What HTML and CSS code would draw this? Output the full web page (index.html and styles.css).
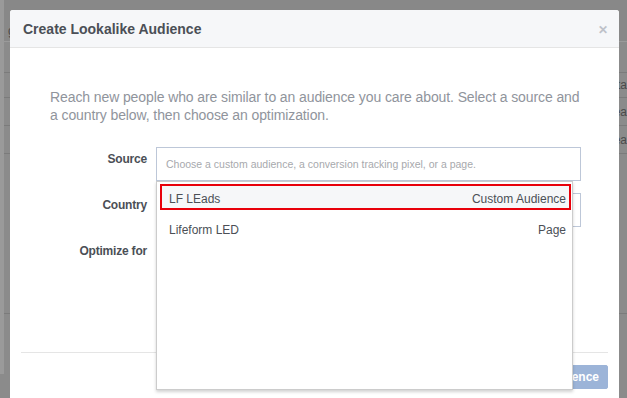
FILE: index.html
```html
<!DOCTYPE html>
<html>
<head>
<meta charset="utf-8">
<link rel="stylesheet" href="styles.css">
</head>
<body>
<div class="page">
  <div class="bg-row r1"><span class="bg-left">g</span></div>
  <div class="bg-row r2"></div>
  <div class="bg-row r3"><span class="bg-right">ta</span></div>
  <div class="bg-row r4"><span class="bg-right">ea</span></div>
  <div class="bg-row r5"><span class="bg-right">ea</span></div>
  <div class="bg-row r6"></div>
  <div class="bg-row r7"></div>
</div>

<div class="dialog">
  <div class="dialog-header">
    <span class="dialog-title">Create Lookalike Audience</span>
    <span class="close">&#x2715;</span>
  </div>
  <div class="dialog-body">
    <p class="intro">Reach new people who are similar to an audience you care about. Select a source and a country below, then choose an optimization.</p>
    <div class="form">
      <label class="label">Source</label>
      <div class="field source">
        <div class="input placeholder">Choose a custom audience, a conversion tracking pixel, or a page.</div>
        <div class="menu">
          <div class="item selected"><span>LF LEads</span><span>Custom Audience</span></div>
          <div class="item"><span>Lifeform LED</span><span>Page</span></div>
        </div>
      </div>
      <label class="label">Country</label>
      <div class="field"><div class="input"></div></div>
      <label class="label">Optimize for</label>
      <div class="field opt"></div>
    </div>
  </div>
  <div class="dialog-footer">
    <button class="primary">Create Audience</button>
  </div>
</div>
</body>
</html>
```

FILE: styles.css
```css
html, body {
  margin: 0;
  padding: 0;
}
body {
  width: 627px;
  height: 398px;
  overflow: hidden;
  position: relative;
  background: #8b8b8b;
  font-family: "Liberation Sans", Arial, sans-serif;
}
.page {
  display: flex;
  flex-direction: column;
  border-left: 4px solid #9a9a9a;
}
.bg-row {
  border-bottom: 1px solid #7b7b7b;
  display: flex;
  justify-content: space-between;
  align-items: center;
  font-size: 12px;
  color: #4a4a4a;
  padding: 0 0 0 4px;
}
.r1 { height: 41px; border-bottom-color: #9a9a9a; background: #888; }
.r2 { height: 30px; }
.r3 { height: 24px; }
.r4 { height: 27px; }
.r5 { height: 27px; }
.r6 { height: 159px; }
.r7 { height: 60px; border-bottom: none; }
.bg-left { margin-top: 20px; }
.bg-right { margin-left: auto; }

.dialog {
  position: absolute;
  left: 10px;
  top: 10px;
  width: 609px;
  height: 400px;
  background: #fff;
  border-radius: 3px 3px 0 0;
  display: flex;
  flex-direction: column;
}
.dialog-header {
  height: 37px;
  background: #f6f7f9;
  border-bottom: 1px solid #e5e5e5;
  border-radius: 3px 3px 0 0;
  display: flex;
  align-items: center;
  justify-content: space-between;
  padding: 0 11px 0 13px;
}
.dialog-title {
  font-size: 14px;
  font-weight: bold;
  color: #4b4f56;
}
.close {
  font-size: 12px;
  color: #bec2c9;
  font-weight: bold;
  padding-top: 2px;
}
.dialog-body {
  padding: 40px 38px 0 40px;
  height: 264px;
}
.intro {
  margin: 0;
  font-size: 14px;
  line-height: 18px;
  color: #90949c;
  letter-spacing: -0.1px;
}
.form {
  margin-top: 23px;
  display: grid;
  grid-template-columns: 97px 1fr;
  column-gap: 9px;
  row-gap: 12px;
}
.label {
  text-align: right;
  font-size: 12px;
  font-weight: bold;
  color: #4b4f56;
  padding-top: 5px;
  letter-spacing: -0.2px;
}
.field {
  position: relative;
}
.input {
  height: 32px;
  border: 1px solid #bdc7d8;
  box-sizing: content-box;
  font-size: 10.5px;
  color: #a7a9ad;
  display: flex;
  align-items: center;
  padding: 0 9px;
  background: #fff;
}
.opt {
  height: 20px;
}
.menu {
  position: absolute;
  z-index: 2;
  left: 0;
  top: 34px;
  width: 415px;
  height: 205px;
  background: #fff;
  border: 1px solid #ccc;
  box-shadow: 0 2px 3px rgba(0, 0, 0, 0.18);
  padding-top: 2px;
}
.item {
  margin: 0 1px 5px 3px;
  height: 26px;
  box-sizing: border-box;
  border: 2px solid transparent;
  padding: 3px 3px 0 7px;
  display: flex;
  justify-content: space-between;
  align-items: center;
  font-size: 12px;
  color: #4b4f56;
}
.item.selected {
  border-color: #e8000b;
  background: #f6f7f9;
}
.dialog-footer {
  margin: 0 11px;
  border-top: 1px solid #e5e5e5;
  padding-top: 12px;
  display: flex;
  justify-content: flex-end;
}
.primary {
  height: 24px;
  background: #9cb4d8;
  border: 1px solid #9cb4d8;
  border-radius: 2px;
  color: #fff;
  font-family: "Liberation Sans", Arial, sans-serif;
  font-size: 12px;
  font-weight: bold;
  padding: 0 8px;
}
```
